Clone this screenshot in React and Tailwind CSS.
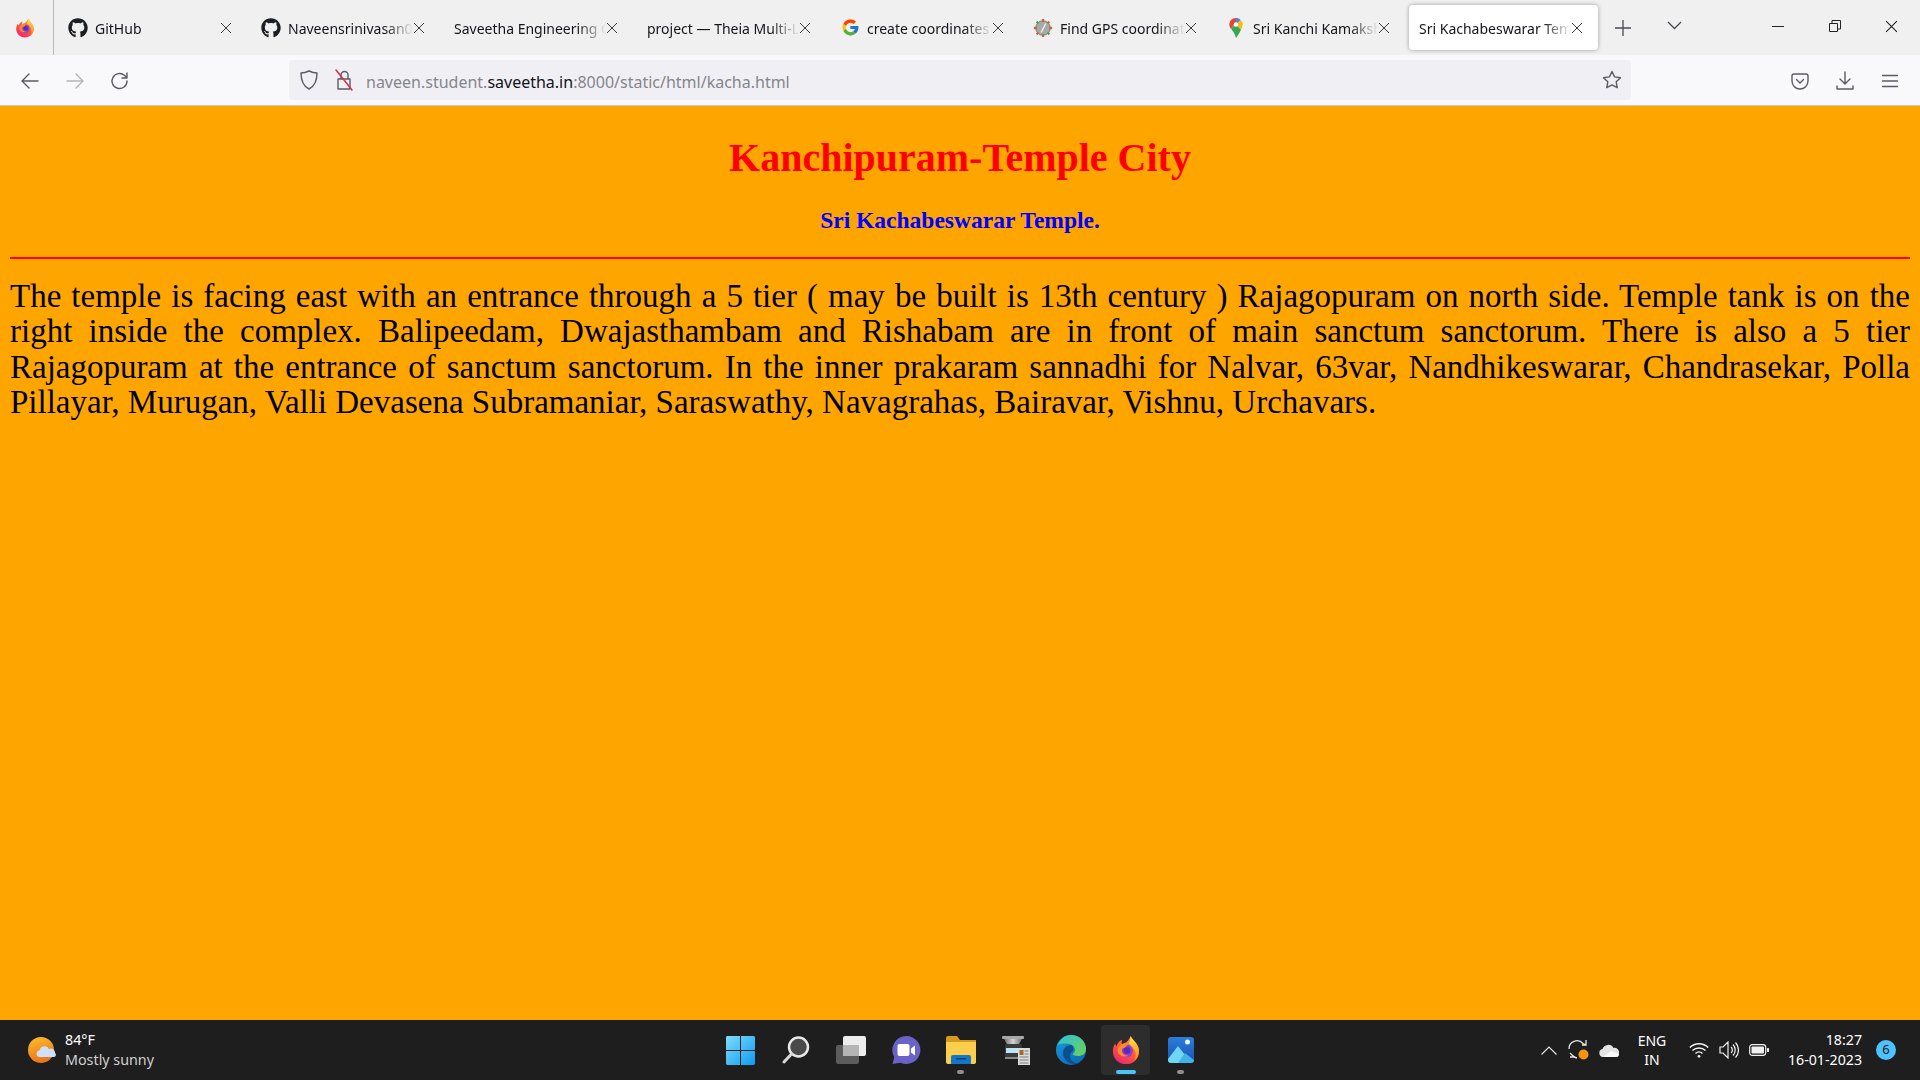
import { FaGithub } from 'react-icons/fa';
import { FcGoogle } from 'react-icons/fc';

const FirefoxIcon = ({ size = 20, id = 'a' }) => (
  <svg width={size} height={size} viewBox="0 0 32 32">
    <defs>
      <linearGradient id={`ffBody${id}`} x1="0.8" y1="0.05" x2="0.25" y2="0.95">
        <stop offset="0" stopColor="#ffa62b" />
        <stop offset="0.5" stopColor="#ff5a34" />
        <stop offset="1" stopColor="#f0276f" />
      </linearGradient>
      <linearGradient id={`ffFlame${id}`} x1="0.4" y1="0" x2="0.6" y2="1">
        <stop offset="0" stopColor="#ffe14a" />
        <stop offset="1" stopColor="#ff8a1f" />
      </linearGradient>
    </defs>
    <path d="M21 1c1 3 4 5 6 8 3 4 3.600 9 2 13-2 6-7 9-13 9C8 31 2 25 2 17.500 2 14 3 11 4.500 9c.2 1.500.8 2.500 1.500 3 .5-3 3-6 6-7-1 2-1 3.500 0 4.500 3-.5 7-3 9-8.500z" fill={`url(#ffBody${id})`} />
    <path d="M21 1c1 3 4 5 6 8 3 4 3.600 9 2 13-1 2.500-2.500 4-4 5 2-4 2-9-1-13-2-2.500-4-4-5-5 1-2 2-5 2-8z" fill={`url(#ffFlame${id})`} />
    <circle cx="16.500" cy="17" r="6.800" fill="#8a3fd8" />
    <circle cx="17" cy="16.500" r="3.600" fill="#5b2bb5" />
    <path d="M8.500 12.500c2-3 6.500-4.500 10.500-3-2 .8-3 2-3.500 3.500-2 .5-4 1.200-4 3.200 0 3.200 3 5.800 7 5.800-4 2.200-10 .2-11.200-4-.6-2.200 0-4 1.200-5.500z" fill="#ff8a2b" />
  </svg>
);

const PinIcon = () => (
  <svg width="14" height="20" viewBox="0 0 16 24">
    <path d="M8 0C3.600 0 0 3.400 0 7.800c0 2 .8 3.600 1.800 5L8 6z" fill="#e94335" />
    <path d="M2 13c2 3 4.800 5.500 6 11 .2 0 5-7 6-10L8 7z" fill="#34a853" />
    <path d="M8 0c2 0 4 .8 5.500 2.300L8 8z" fill="#4285f4" />
    <path d="M13.500 2.300C15.200 4 16 6 16 7.800c0 2-1 4.200-2.200 6.200L8 8z" fill="#fbbc04" />
    <circle cx="8" cy="7.800" r="2.800" fill="#fff" />
  </svg>
);

const GpsIcon = () => (
  <svg width="20" height="20" viewBox="0 0 22 22">
    <circle cx="11" cy="11" r="8" fill="#a9a9a9" stroke="#777" strokeWidth="1" />
    <path d="M11 1v3M11 18v3M1 11h3M18 11h3" stroke="#c0693a" strokeWidth="2.500" />
    <path d="M4 4l2 2M16 16l2 2" stroke="#4f9a58" strokeWidth="2.500" />
    <path d="M18 4l-2 2M4 18l2-2" stroke="#c0693a" strokeWidth="2.500" />
    <path d="M14 6l-5 10" stroke="#efefef" strokeWidth="1.500" />
  </svg>
);

const CloseIcon = ({ size = 12, color = '#3a3a42', width = 1 }) => (
  <svg width={size} height={size} viewBox="0 0 12 12" fill="none" stroke={color} strokeWidth={width}>
    <path d="M1 1l10 10M11 1L1 11" />
  </svg>
);

const tabs = [
  { title: 'GitHub', icon: <FaGithub size={20} color="#1b1f23" /> },
  { title: 'Naveensrinivasan0', icon: <FaGithub size={20} color="#1b1f23" /> },
  { title: 'Saveetha Engineering College' },
  { title: 'project — Theia Multi-Language' },
  { title: 'create coordinates', icon: <FcGoogle size={19} /> },
  { title: 'Find GPS coordinates', icon: <GpsIcon /> },
  { title: 'Sri Kanchi Kamakshi', icon: <PinIcon /> },
  { title: 'Sri Kachabeswarar Temple', active: true },
];

const Tab = ({ title, icon, active }) => (
  <div
    className={`ml-[4px] flex h-[45px] w-[189px] shrink-0 items-center pl-[10px] pr-[15px] ${
      active ? 'rounded-[4px] bg-white shadow-[0_0_4px_rgba(0,0,0,0.35)]' : ''
    }`}
  >
    {icon && <span className="mr-[7px] flex w-[20px] shrink-0 items-center justify-center">{icon}</span>}
    <span className="mt-[2px] min-w-0 flex-1 overflow-hidden whitespace-nowrap text-[14px] text-[#15141a] [mask-image:linear-gradient(to_left,transparent,black_28px)]">
      {title}
    </span>
    <CloseIcon />
  </div>
);

const TabBar = () => (
  <div className="flex h-[55px] shrink-0 items-start bg-[#f0f0f0]">
    <div className="flex h-[55px] w-[54px] shrink-0 items-center justify-center border-r border-[#b8b8bc] pr-[4px]">
      <FirefoxIcon size={20} id="tab" />
    </div>
    <div className="mt-[5px] flex">
      {tabs.map((t) => (
        <Tab key={t.title} {...t} />
      ))}
    </div>
    <div className="mt-[5px] flex h-[45px] items-center">
      <svg className="ml-[17px]" width="16" height="16" viewBox="0 0 16 16" stroke="#4a4a52" strokeWidth="1.300">
        <path d="M8 0v16M0 8h16" />
      </svg>
      <svg className="ml-[36px] -mt-[4px]" width="15" height="9" viewBox="0 0 15 9" fill="none" stroke="#4a4a52" strokeWidth="1.300">
        <path d="M1 1l6.500 6.500L14 1" />
      </svg>
    </div>
    <div className="ml-auto flex h-[52px]">
      <div className="flex w-[56px] items-center justify-center">
        <div className="h-px w-[12px] bg-[#222]" />
      </div>
      <div className="flex w-[56px] items-center justify-center">
        <svg className="ml-[1px]" width="12" height="12" viewBox="0 0 12 12" fill="none" stroke="#222" strokeWidth="1">
          <path d="M.5 3.500h8v8h-8zM3 3.500V.5h8.500V9H8.500" />
        </svg>
      </div>
      <div className="flex w-[58px] items-center justify-center">
        <CloseIcon size={13} color="#222" width={1} />
      </div>
    </div>
  </div>
);

const Slot = ({ children }) => <div className="flex h-full w-[45px] items-center justify-center">{children}</div>;

const tb = { fill: 'none', stroke: '#5b5b66', strokeWidth: 1.4, strokeLinecap: 'round', strokeLinejoin: 'round' };

const Toolbar = () => (
  <div className="flex h-[51px] shrink-0 items-center border-b border-[#c9c9cc] bg-[#f9f9fb] pl-[7px] pr-[8px]">
    <Slot>
      <svg className="mt-[2px]" width="20" height="20" viewBox="0 0 20 20" {...tb}>
        <path d="M18 10H2M9 3l-7 7 7 7" />
      </svg>
    </Slot>
    <Slot>
      <svg className="mt-[2px]" width="20" height="20" viewBox="0 0 20 20" {...tb} stroke="#b4b4ba">
        <path d="M2 10h16M11 3l7 7-7 7" />
      </svg>
    </Slot>
    <Slot>
      <svg className="mt-[2px] ml-[1px]" width="20" height="20" viewBox="0 0 20 20" {...tb}>
        <path d="M17 10a7.500 7.500 0 1 1-2.300-5.400L17 7M17 2v5h-5" />
      </svg>
    </Slot>
    <div className="ml-[147px] flex h-[40px] w-[1342px] items-center rounded-[4px] bg-[#f0f0f4] pl-[10px] pr-[9px]">
      <svg width="20" height="22" viewBox="0 0 20 22" {...tb}>
        <path d="M10 2c3 1.500 5 2 8 2 0 8-2 13-8 16C4 17 2 12 2 4c3 0 5-.5 8-2z" />
      </svg>
      <svg className="ml-[15px]" width="20" height="24" viewBox="0 0 20 24" {...tb}>
        <path d="M7 11V7a3.500 3.500 0 0 1 7 0v4M4 11h12v10H4z" />
        <path d="M2 2l16 20" stroke="#e22850" strokeWidth="1.500" />
      </svg>
      <div className="ml-[12px] flex-1 whitespace-nowrap pt-[3px] text-[16px] text-[#85858c]">
        naveen.student.<span className="text-[#15141a]">saveetha.in</span>:8000/static/html/kacha.html
      </div>
      <svg width="20" height="20" viewBox="0 0 20 20" {...tb}>
        <path d="M10 1.500l2.600 5.400 5.900.8-4.300 4.100 1 5.900-5.200-2.800-5.200 2.800 1-5.900L1.500 7.700l5.900-.8z" />
      </svg>
    </div>
    <div className="ml-auto flex h-full">
      <Slot>
        <svg className="mt-[2px]" width="18" height="18" viewBox="0 0 18 18" {...tb}>
          <path d="M3 2h12a2 2 0 0 1 2 2v5a8 8 0 0 1-16 0V4a2 2 0 0 1 2-2zM5.500 7.500L9 11l3.500-3.500" />
        </svg>
      </Slot>
      <Slot>
        <svg className="mt-[2px]" width="18" height="20" viewBox="0 0 18 20" {...tb}>
          <path d="M9 1v12M4 8l5 5 5-5M1 15v3h16v-3" />
        </svg>
      </Slot>
      <Slot>
        <svg className="mt-[2px]" width="16" height="14" viewBox="0 0 16 14" {...tb}>
          <path d="M0.500 1.500h15M0.500 7h15M0.500 12.500h15" />
        </svg>
      </Slot>
    </div>
  </div>
);

const lines = [
  'The temple is facing east with an entrance through a 5 tier ( may be built is 13th century ) Rajagopuram on north side. Temple tank is on the',
  'right inside the complex. Balipeedam, Dwajasthambam and Rishabam are in front of main sanctum sanctorum. There is also a 5 tier',
  'Rajagopuram at the entrance of sanctum sanctorum. In the inner prakaram sannadhi for Nalvar, 63var, Nandhikeswarar, Chandrasekar, Polla',
];

const Page = () => (
  <main className="flex-1 overflow-hidden bg-[#ffa500] px-[10px] font-['Liberation_Serif',serif]">
    <h1 className="mt-[29px] text-center text-[40px] font-bold leading-[46px] text-[#ff0000]">Kanchipuram-Temple City</h1>
    <h2 className="mt-[26px] text-center text-[23.500px] font-bold leading-[26px] text-[#0000ff]">Sri Kachabeswarar Temple.</h2>
    <hr className="mt-[24px] border-0 border-t-2 border-[#ff0000]" />
    <div className="mt-[20px] text-[33px] leading-[35.300px] text-black">
      {lines.map((l) => (
        <div key={l} className="text-justify [text-align-last:justify]">
          {l}
        </div>
      ))}
      <div>Pillayar, Murugan, Valli Devasena Subramaniar, Saraswathy, Navagrahas, Bairavar, Vishnu, Urchavars.</div>
    </div>
  </main>
);

const WeatherIcon = () => (
  <svg width="28" height="28" viewBox="0 0 28 28">
    <defs>
      <linearGradient id="sun" x1="0.3" y1="0" x2="0.6" y2="1">
        <stop offset="0" stopColor="#fbb92a" />
        <stop offset="1" stopColor="#e8701a" />
      </linearGradient>
    </defs>
    <circle cx="13" cy="14" r="13" fill="url(#sun)" />
    <path d="M11 21a3.500 3.500 0 0 1 .5-6.800 5 5 0 0 1 9.500-1 4 4 0 0 1 6 3.800 2.200 2.200 0 0 1-1 4z" fill="#cfe0f8" />
  </svg>
);

const WindowsIcon = () => (
  <svg width="29" height="29" viewBox="0 0 30 30">
    <defs>
      <linearGradient id="win" x1="0" y1="0" x2="1" y2="1">
        <stop offset="0" stopColor="#7fdcfb" />
        <stop offset="1" stopColor="#0d9bf0" />
      </linearGradient>
    </defs>
    <path d="M0 1.500A1.500 1.500 0 0 1 1.500 0H14.500v14.500H0zM15.500 0h13A1.500 1.500 0 0 1 30 1.500V14.500H15.500zM0 15.500h14.500V30H1.500A1.500 1.500 0 0 1 0 28.500zM15.500 15.500H30v13a1.500 1.500 0 0 1-1.500 1.500H15.500z" fill="url(#win)" />
  </svg>
);

const SearchIcon = () => (
  <svg width="28" height="28" viewBox="0 0 28 28" fill="none">
    <circle cx="16.500" cy="11" r="9.500" fill="#4a4a4a" stroke="#e8e8e8" strokeWidth="2.500" />
    <path d="M9.500 18L2 26" stroke="#d8d8d8" strokeWidth="3" strokeLinecap="round" />
  </svg>
);

const TaskViewIcon = () => (
  <svg width="30" height="28" viewBox="0 0 30 28">
    <rect x="0" y="9" width="23" height="19" rx="2" fill="#5c5c5c" />
    <rect x="7" y="0" width="23" height="20" rx="2" fill="#ececec" />
    <rect x="7" y="9" width="16" height="11" fill="#b5b5b5" />
  </svg>
);

const ChatIcon = () => (
  <svg width="30" height="30" viewBox="0 0 30 30">
    <path d="M15.500 1a14 14 0 1 1-6 26.700L1.500 29l1.800-7A14 14 0 0 1 15.500 1z" fill="#6a62c6" />
    <rect x="6.500" y="9" width="12" height="12" rx="2" fill="#fff" />
    <path d="M20 13.500l4-3v10l-4-3z" fill="#fff" />
  </svg>
);

const ExplorerIcon = () => (
  <svg width="30" height="28" viewBox="0 0 30 28">
    <path d="M0 2a2 2 0 0 1 2-2h9l3 4h16v8H0z" fill="#d99a1a" />
    <path d="M0 6h30v20a2 2 0 0 1-2 2H2a2 2 0 0 1-2-2z" fill="#fbcf4d" />
    <path d="M5 28v-7a2 2 0 0 1 2-2h16a2 2 0 0 1 2 2v7z" fill="#1277c9" />
    <rect x="10" y="22" width="10" height="1.500" fill="#073f73" />
  </svg>
);

const ScannerIcon = () => (
  <svg width="30" height="30" viewBox="0 0 30 30">
    <defs>
      <linearGradient id="scanTop" x1="0" y1="0" x2="1" y2="0">
        <stop offset="0" stopColor="#6e6e6e" />
        <stop offset="0.5" stopColor="#d4d4d4" />
        <stop offset="1" stopColor="#6e6e6e" />
      </linearGradient>
    </defs>
    <rect x="1" y="1" width="22" height="3" rx="1" fill="#a8a8a8" />
    <path d="M3 4h18l-3 5H6z" fill="url(#scanTop)" />
    <rect x="4" y="9" width="17" height="14" rx="2" fill="#3a3a3a" />
    <rect x="5" y="13" width="15" height="5" fill="#bfe4f4" />
    <rect x="4" y="22" width="17" height="2" fill="#8a8a8a" />
    <rect x="17" y="13" width="12" height="17" fill="#dcdcdc" />
    <rect x="18.500" y="15" width="4" height="5" fill="#a06a2a" />
    <path d="M23.500 16h4M23.500 19h4M18.500 22h9M18.500 25h9M18.500 28h9" stroke="#7d7d7d" />
  </svg>
);

const EdgeIcon = () => (
  <svg width="30" height="30" viewBox="0 0 30 30">
    <defs>
      <linearGradient id="edgeA" x1="0" y1="0" x2="1" y2="1">
        <stop offset="0" stopColor="#2dc1d8" />
        <stop offset="1" stopColor="#6fd24f" />
      </linearGradient>
      <linearGradient id="edgeB" x1="0" y1="0" x2="0.6" y2="1">
        <stop offset="0" stopColor="#1a9be0" />
        <stop offset="1" stopColor="#0d6db8" />
      </linearGradient>
    </defs>
    <circle cx="15" cy="15" r="15" fill="url(#edgeB)" />
    <path d="M2 10C4 4 9 0 15 0c8 0 15 6 15 14 0 5-4 7-8 7-3 0-5-1-5.500-2 4-2 3-9-3-10C8 8 4 9 2 10z" fill="url(#edgeA)" />
    <path d="M15 10c-5 0-8 4-8 8 0 6 5 11 11 11 2 0 4-.5 5-1-5 1-9-3-9-7 0-3 2-4.500 3-5 1-2 0-6-2-6z" fill="#0b4f8e" />
  </svg>
);

const PhotosIcon = () => (
  <svg width="26" height="26" viewBox="0 0 26 26">
    <defs>
      <linearGradient id="ph" x1="0" y1="0" x2="0" y2="1">
        <stop offset="0" stopColor="#2a7fdb" />
        <stop offset="1" stopColor="#1d4fb0" />
      </linearGradient>
    </defs>
    <rect width="26" height="26" rx="3" fill="url(#ph)" />
    <circle cx="19.500" cy="5" r="2.500" fill="#eef4ff" />
    <path d="M0 22l10-13 7 9-4 8H3a3 3 0 0 1-3-3z" fill="#6fd6f5" />
    <path d="M10 26l7-10 9 7v0a3 3 0 0 1-3 3z" fill="#3fb4e8" />
  </svg>
);

const apps = [
  { key: 'win', el: <WindowsIcon /> },
  { key: 'search', el: <SearchIcon /> },
  { key: 'view', el: <TaskViewIcon /> },
  { key: 'chat', el: <ChatIcon /> },
  { key: 'files', el: <ExplorerIcon />, open: true },
  { key: 'scan', el: <ScannerIcon /> },
  { key: 'edge', el: <EdgeIcon /> },
  { key: 'ff', el: <FirefoxIcon size={30} id="bar" />, active: true },
  { key: 'photos', el: <PhotosIcon />, open: true },
];

const TrayBox = ({ children, className = 'w-[30px]' }) => (
  <div className={`flex h-full items-center justify-center ${className}`}>{children}</div>
);

const Taskbar = () => (
  <div className="flex h-[60px] shrink-0 items-center bg-[#1e1e1e] text-white">
    <div className="flex h-full w-[713px] shrink-0 items-center pl-[28px]">
      <WeatherIcon />
      <div className="ml-[9px] text-[14.300px] leading-[20px]">
        <div>84°F</div>
        <div className="text-[#d0d0d0]">Mostly sunny</div>
      </div>
    </div>
    <div className="flex h-full">
      {apps.map((a) => (
        <div key={a.key} className="relative flex h-full w-[55px] items-center justify-center">
          {a.active && <div className="absolute inset-x-[3px] inset-y-[5px] rounded-[4px] bg-[#2d2d2d]" />}
          <span className="relative flex">{a.el}</span>
          {a.open && <div className="absolute bottom-[6px] h-[4px] w-[7px] rounded-full bg-[#8e8e8e]" />}
          {a.active && <div className="absolute bottom-[6px] h-[4px] w-[20px] rounded-full bg-[#4cc2ff]" />}
        </div>
      ))}
    </div>
    <div className="ml-[326px] flex h-full items-center">
      <TrayBox>
        <svg width="16" height="9" viewBox="0 0 16 9" fill="none" stroke="#e6e6e6" strokeWidth="1.200">
          <path d="M.5 8.500L8 1l7.500 7.500" />
        </svg>
      </TrayBox>
      <TrayBox>
        <svg width="22" height="22" viewBox="0 0 22 22" fill="none" stroke="#e6e6e6" strokeWidth="1.300">
          <path d="M1 10a8 8 0 0 1 14-5.500L18 6M18 1v5h-4M3 15l3 3h-4M2 14l2 2a8 8 0 0 0 5 3" />
          <circle cx="15.500" cy="15.500" r="5" fill="#f7930e" stroke="none" />
        </svg>
      </TrayBox>
      <TrayBox>
        <svg width="20" height="13" viewBox="0 0 20 13">
          <path d="M4 13a4 4 0 0 1-.5-7.900A6 6 0 0 1 14.500 4 4.500 4.500 0 0 1 20 9c0 2-1 4-3 4z" fill="#e4e4e4" />
          <path d="M4 13l8-6 8 3c0 2-1 3-3 3z" fill="#fafafa" />
        </svg>
      </TrayBox>
      <div className="w-[56px] text-center text-[14px] leading-[19px]">
        <div>ENG</div>
        <div>IN</div>
      </div>
      <TrayBox className="ml-[4px] w-[30px]">
        <svg width="20" height="16" viewBox="0 0 20 16" fill="none" stroke="#f0f0f0" strokeWidth="1.500">
          <path d="M.8 5.500a13 13 0 0 1 18.400 0M3.500 8.500a9.500 9.500 0 0 1 13 0M6.500 11.500a5 5 0 0 1 7 0" />
          <circle cx="10" cy="14.300" r="1.400" fill="#f0f0f0" stroke="none" />
        </svg>
      </TrayBox>
      <TrayBox>
        <svg width="20" height="18" viewBox="0 0 20 18" fill="none" stroke="#f0f0f0" strokeWidth="1.200">
          <path d="M1 6h3l5-5v16l-5-5H1zM12 6a4 4 0 0 1 0 6M14 3.500a8 8 0 0 1 0 11M16.500 1.500a11 11 0 0 1 0 15" />
        </svg>
      </TrayBox>
      <TrayBox>
        <svg width="20" height="12" viewBox="0 0 20 12" fill="none">
          <rect x=".7" y=".7" width="16" height="10.600" rx="2.500" stroke="#f0f0f0" strokeWidth="1.200" />
          <rect x="2.500" y="2.500" width="12.500" height="7" rx="1" fill="#f0f0f0" />
          <rect x="18" y="4" width="2" height="4" rx=".5" fill="#f0f0f0" />
        </svg>
      </TrayBox>
      <div className="w-[88px] text-right text-[14.200px] leading-[20px]">
        <div>18:27</div>
        <div>16-01-2023</div>
      </div>
      <div className="ml-[14px] flex h-[20px] w-[20px] items-center justify-center rounded-full bg-[#4cc2ff] text-[13px] text-[#1a1a1a]">
        6
      </div>
    </div>
  </div>
);

export default function App() {
  return (
    <div className="flex h-screen w-screen flex-col overflow-hidden font-['Noto_Sans',sans-serif]">
      <TabBar />
      <Toolbar />
      <Page />
      <Taskbar />
    </div>
  );
}
